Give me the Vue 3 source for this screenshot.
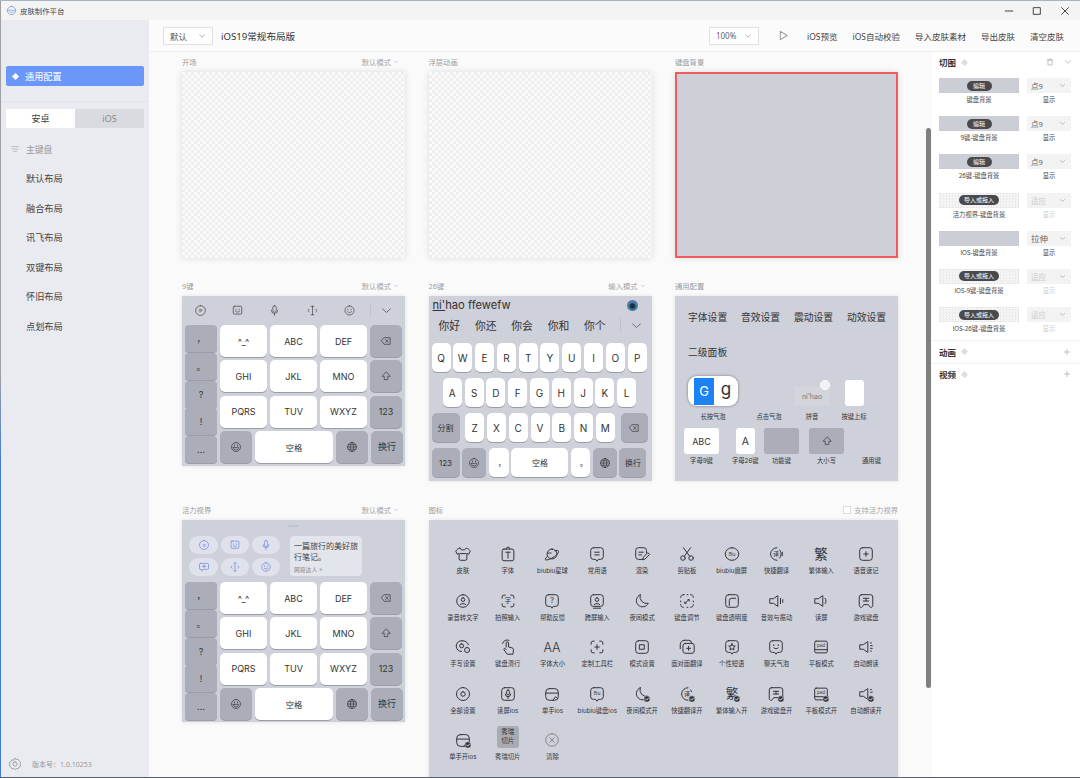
<script setup>
// 皮肤制作平台 — 主界面
const navItems = ["默认布局", "融合布局", "讯飞布局", "双键布局", "怀旧布局", "点划布局"];
const toolActions = ["iOS预览", "iOS自动校验", "导入皮肤素材", "导出皮肤", "清空皮肤"];

const p = {
  del: "M7 4.5h10v11H7L2.5 10zM9.5 7.8l4 4.4M13.5 7.8l-4 4.4",
  shift: "M10 3.5 3.5 10.5H7V16h6v-5.5h3.5z",
  globe: "M10 2.5a7.5 7.5 0 1 0 0 15a7.5 7.5 0 1 0 0-15zM2.5 10h15M10 2.5c-4 4.5-4 10.5 0 15M10 2.5c4 4.5 4 10.5 0 15M3.6 6.3h12.8M3.6 13.7h12.8",
  emoji: "M10 2.5a7.5 7.5 0 1 0 0 15a7.5 7.5 0 1 0 0-15zM5.5 11h9c-.3 2.6-2.2 4-4.5 4s-4.2-1.4-4.5-4zM7.5 6.5v2M12.5 6.5v2",
  chev: "M4 7.5 10 13l6-5.5",
  mic: "M10 2.5a2.6 2.6 0 0 0-2.6 2.6v4.8a2.6 2.6 0 0 0 5.2 0V5.1A2.6 2.6 0 0 0 10 2.5zM5 9.5a5 5 0 0 0 10 0M10 14.5v3",
  cursor: "M8 3.5h4M8 16.5h4M10 3.5v13M5 8l-2 2 2 2M15 8l2 2-2 2",
  smile: "M10 3a7 7 0 1 0 0 14a7 7 0 1 0 0-14zM7.5 8v1M12.5 8v1M7 12c1.5 1.5 4.5 1.5 6 0",
  face: "M5 3.5h10A1.5 1.5 0 0 1 16.5 5v9a1.5 1.5 0 0 1-1.5 1.5H5A1.5 1.5 0 0 1 3.5 14V5A1.5 1.5 0 0 1 5 3.5zM7.5 8v1M12.5 8v1M7 11.5c1.5 1.3 4.5 1.3 6 0",
  circ: "M10 2.5a7.5 7.5 0 1 0 0 15a7.5 7.5 0 1 0 0-15z",
};

const toolbarIcons = [
  { d: p.circ, t: "拼" },
  { d: p.face },
  { d: p.mic },
  { d: p.cursor },
  { d: p.smile },
];
const vitalityRows = [
  [{ d: p.circ, t: "译", c: "w29" }, { d: p.face, c: "w28" }, { d: p.mic, c: "w28" }],
  [{ d: "M4 4h12a1.5 1.5 0 0 1 1.5 1.5v7A1.5 1.5 0 0 1 16 14H9l-3 2.5V14H4a1.5 1.5 0 0 1-1.5-1.5v-7A1.5 1.5 0 0 1 4 4zM7 9h6M10 6.5v5", c: "w29" }, { d: p.cursor, c: "w28" }, { d: p.smile, c: "w28" }],
];

const sideKeys = ["，", "。", "?", "!", "..."];
const nineRows = [
  [{ t: "^_^" }, { t: "ABC" }, { t: "DEF" }, { i: p.del, c: "fn" }],
  [{ t: "GHI" }, { t: "JKL" }, { t: "MNO" }, { i: p.shift, c: "fn" }],
  [{ t: "PQRS" }, { t: "TUV" }, { t: "WXYZ" }, { t: "123", c: "fn" }],
  [{ i: p.emoji, c: "fn" }, { t: "空格", c: "space" }, { i: p.globe, c: "fn" }, { t: "换行", c: "fn" }],
];

const candidates = ["你好", "你还", "你会", "你和", "你个"];
const rowQ = "QWERTYUIOP".split("");
const rowA = "ASDFGHJKL".split("");
const rowZ = "ZXCVBNM".split("");
const bottomRow = [
  { t: "123", c: "w28 fn" },
  { i: p.emoji, c: "w24 fn" },
  { t: "，", c: "w20 nudge" },
  { t: "空格", c: "w57" },
  { t: "。", c: "w19 nudge" },
  { i: p.globe, c: "w24 fn" },
  { t: "换行", c: "w27 fn" },
];

const cfgTabs = ["字体设置", "音效设置", "震动设置", "动效设置"];

const sliceRows = [
  { label: "键盘背景", btn: "编辑", mode: "点9" },
  { label: "9键-键盘背景", btn: "编辑", mode: "点9" },
  { label: "26键-键盘背景", btn: "编辑", mode: "点9" },
  { label: "活力视界-键盘背景", btn: "导入或拖入", mode: "适应", off: true },
  { label: "iOS-键盘背景", mode: "拉伸", big: true },
  { label: "iOS-9键-键盘背景", btn: "导入或拖入", mode: "适应", off: true },
  { label: "iOS-26键-键盘背景", btn: "导入或拖入", mode: "适应", off: true },
];

// 图标面板用到的基础形状
const box = "M6 3h8a3 3 0 0 1 3 3v8a3 3 0 0 1-3 3H6a3 3 0 0 1-3-3V6a3 3 0 0 1 3-3z";
const bubble = "M6 3h8a3 3 0 0 1 3 3v7a3 3 0 0 1-3 3h-2.5L10 18l-1.5-2H6a3 3 0 0 1-3-3V6a3 3 0 0 1 3-3z";
const circle = "M10 3a7 7 0 1 0 0 14a7 7 0 1 0 0-14z";
const corners = "M7 3.5H5.5a2 2 0 0 0-2 2V7M13 3.5h1.5a2 2 0 0 1 2 2V7M7 16.5H5.5a2 2 0 0 1-2-2V13M13 16.5h1.5a2 2 0 0 0 2-2V13";
const moon = "M8 3a7 7 0 1 0 9 9.5A7.5 7.5 0 0 1 8 3z";
const speaker = "M3.5 7.5H7L12 4v12l-5-3.5H3.5z";
const pad = "M4.5 3.5h11A1.5 1.5 0 0 1 17 5v10a1.5 1.5 0 0 1-1.5 1.5h-11A1.5 1.5 0 0 1 3 15V5a1.5 1.5 0 0 1 1.5-1.5zM3 13h14";
const person = "M10 6.5a2 2 0 1 0 0 4a2 2 0 1 0 0-4zM6.8 14c.6-1.6 5.8-1.6 6.4 0";
const game = "M5 3h10a2.5 2.5 0 0 1 2.5 2.5V15a2 2 0 0 1-3.6 1.2L12.5 14h-5l-1.4 2.2A2 2 0 0 1 2.5 15V5.5A2.5 2.5 0 0 1 5 3zM7 7h6M7 10h6M10 7v3";
const onehand = "M7 4h6a4 4 0 0 1 4 4v5a4 4 0 0 1-4 4H7a4 4 0 0 1-4-4V8a4 4 0 0 1 4-4zM3 9h14M11 17l3-4 2 2";

const iconItems = [
  { l: "皮肤", d: "M6.5 3.5C4.5 4 2.8 5 2 7l1.5 3.2 2.2-.8v6.1A1.5 1.5 0 0 0 7.2 17h5.6a1.5 1.5 0 0 0 1.5-1.5V9.4l2.2.8L18 7c-.8-2-2.5-3-4.5-3.5-.6 1.4-1.9 2-3.5 2s-2.9-.6-3.5-2zM7 9.5h6" },
  { l: "字体", d: "M5.5 4.5h9a2 2 0 0 1 2 2v9a2 2 0 0 1-2 2h-9a2 2 0 0 1-2-2v-9a2 2 0 0 1 2-2zM8 4.5 9 2.5h2l1 2M7.5 8h5M10 8v6.5" },
  { l: "biubiu星球", d: "M10 4.5a5.5 5.5 0 1 0 0 11a5.5 5.5 0 1 0 0-11zM5 12.5C2.5 14.5 2 16 3 16.5c1.5.8 6-1.2 9.5-3.5s5.5-5 4.5-6.5c-.5-.8-2-.6-3.5 0M6 9h3" },
  { l: "常用语", d: bubble + "M7.5 8h5M7.5 11h5" },
  { l: "渲染", d: "M15 9V6a3 3 0 0 0-3-3H6a3 3 0 0 0-3 3v7a3 3 0 0 0 3 3h5M6.5 8h5M6.5 11h3M11 16l.5-2.5 5-5 2 2-5 5z" },
  { l: "剪贴板", d: "M8 14.5a2.5 2.5 0 1 1-5 0a2.5 2.5 0 1 1 5 0zM17 14.5a2.5 2.5 0 1 1-5 0a2.5 2.5 0 1 1 5 0zM7 12.5 14 3M13 12.5 6 3" },
  { l: "biubiu魔屏", d: "M10 3a7.5 7 0 1 0 0 14a7.5 7 0 1 0 0-14z", t: "Biu", ts: 5, ty: 11.8 },
  { l: "快捷翻译", d: "M11 3a7 7 0 1 0 0 14M14 5.5a7 7 0 0 1 0 9M17 8v4", t: "译", ts: 6.5, ty: 12.3 },
  { l: "繁体输入", t: "繁", ts: 15, ty: 15.5 },
  { l: "语音速记", d: box + "M7.5 10h5M10 7.5v5" },

  { l: "录音转文字", d: circle + person },
  { l: "拍照输入", d: corners, t: "字", ts: 7, ty: 12.5 },
  { l: "帮助反馈", d: bubble, t: "?", ts: 8, ty: 12.5 },
  { l: "跨屏输入", d: "M6 3h8a3 3 0 0 1 3 3v7a3 3 0 0 1-3 3H6a3 3 0 0 1-3-3V6a3 3 0 0 1 3-3z" + person + "M6 18h8" },
  { l: "夜间模式", d: moon },
  { l: "键盘调节", d: "M6 3h1M10 3h1M14 3c2 0 3 1 3 3M17 10v1M17 14c0 2-1 3-3 3M10 17h1M6 17c-2 0-3-1-3-3M3 10v1M3 6c0-2 1-3 3-3M8 12.5l4-4M11 8.5h1.5V10M9 12.5H7.5V11" },
  { l: "键盘透明度", d: box + "M7 15V9.5A2.5 2.5 0 0 1 9.5 7H14" },
  { l: "音效与振动", d: speaker + "M15 7v6M17.5 8.5v3" },
  { l: "读屏", d: speaker + "M14.5 7c1.5 2 1.5 4 0 6" },
  { l: "游戏键盘", d: game },

  { l: "手写设置", d: "M9 3C5 3 2.5 5.5 2.5 9s2.5 6 6 6M9 3c3.5 0 6 1.5 7 4.5M8.5 6.5a2.2 2.2 0 1 0 0 4.4a2.2 2.2 0 1 0 0-4.4zM14.5 10.5a2.8 2.8 0 1 0 0 5.6a2.8 2.8 0 1 0 0-5.6z" },
  { l: "键盘滑行", d: "M8 10V5.5a1.3 1.3 0 0 1 2.6 0V10l4 1a2 2 0 0 1 1.5 2.2L15.5 18H9l-3.5-5c-.6-1 .6-2 1.5-1.2L8 13M4 6a5 5 0 0 1 7-3.5" },
  { l: "字体大小", t: "AA", ts: 14, ty: 15.5, thin: true },
  { l: "定制工具栏", d: corners + "M7.5 10h5M10 7.5v5" },
  { l: "模式设置", d: box + "M7.5 7.5h5v5h-5z" },
  { l: "面对面翻译", d: "M7 2.5h5a3 3 0 0 1 3 3M2.5 12V7A4.5 4.5 0 0 1 7 2.5M8 6h7.5A2.5 2.5 0 0 1 18 8.5v6a2.5 2.5 0 0 1-2.5 2.5H8a2.5 2.5 0 0 1-2.5-2.5v-6A2.5 2.5 0 0 1 8 6zM9.5 11.5h4.5M11.75 9.2v4.6" },
  { l: "个性短语", d: bubble + "M10 6.3l1.1 2.4 2.5.3-1.8 1.7.4 2.5-2.2-1.2-2.2 1.2.4-2.5L6.4 9l2.5-.3z" },
  { l: "聊天气泡", d: bubble + "M7.5 7.5v1M12.5 7.5v1M7.5 11c1.5 1.2 3.5 1.2 5 0" },
  { l: "平板模式", d: pad, t: "pad", ts: 5, ty: 9.8 },
  { l: "自动朗读", d: speaker + "M15 5.5h1M15 8.5h2M15 11.5h2M15 14.5h1" },

  { l: "全部设置", d: "M10 2.8a7.2 7.2 0 1 0 0 14.4a7.2 7.2 0 1 0 0-14.4zM10 7.5a2.5 2.5 0 1 0 0 5a2.5 2.5 0 1 0 0-5z" },
  { l: "读屏ios", d: box + "M10 5.5A1.5 1.5 0 0 0 8.5 7v2.5a1.5 1.5 0 0 0 3 0V7A1.5 1.5 0 0 0 10 5.5zM7 10a3 3 0 0 0 6 0M10 13v2" },
  { l: "单手ios", d: onehand },
  { l: "biubiu键盘ios", d: bubble, t: "Biu", ts: 5, ty: 11.5 },
  { l: "夜间模式开", d: moon, on: true },
  { l: "快捷翻译开", d: "M11 3a7 7 0 1 0 0 14M14 5.5a7 7 0 0 1 1 2", t: "译", ts: 6.5, ty: 12.3, on: true },
  { l: "繁体输入开", t: "繁", ts: 14, ty: 14, on: true },
  { l: "游戏键盘开", d: game, on: true },
  { l: "平板模式开", d: pad, t: "pad", ts: 5, ty: 9.8, on: true },
  { l: "自动朗读开", d: speaker + "M15 5h1M15 8h2", on: true },

  { l: "单手开ios", d: onehand, on: true },
  { l: "秀瑞切片", tile: true },
  { l: "清除", d: circle + "M7.5 7.5l5 5M12.5 7.5l-5 5", faint: true },
];
</script>

<template>
  <div class="window">
    <header class="titlebar">
      <svg class="logo" viewBox="0 0 20 20"><path d="M10 2.5a7.5 7.5 0 1 0 0 15a7.5 7.5 0 1 0 0-15zM3 9.5h14M6.5 12.5c2 1.5 5 1.5 7 0" /></svg>
      <span class="app-name">皮肤制作平台</span>
      <div class="win-btns">
        <svg viewBox="0 0 12 12"><path d="M1.5 6h9" /></svg>
        <svg viewBox="0 0 12 12"><path d="M2 2h8v8H2z" /></svg>
        <svg viewBox="0 0 12 12"><path d="M2 2l8 8M10 2l-8 8" /></svg>
      </div>
    </header>

    <div class="body">
      <aside class="sidebar">
        <div class="nav-active"><i class="dot"></i>通用配置</div>
        <div class="side-line"></div>
        <div class="tabs">
          <div class="tab on">安卓</div>
          <div class="tab">iOS</div>
        </div>
        <div class="group-title">
          <svg viewBox="0 0 10 10"><path d="M1 2h8M1 5h8M3 8h4" /></svg>
          主键盘
        </div>
        <div v-for="n in navItems" :key="n" class="nav-item">{{ n }}</div>
        <div class="version">
          <svg viewBox="0 0 20 20"><path d="M10 2l2 1.5 2.6-.3 1.2 2.3L18 8l-.6 2.5.6 2.5-2.2 1.5-1.2 2.3-2.6-.3L10 18l-2-1.5-2.6.3-1.2-2.3L2 13l.6-2.5L2 8l2.2-1.5 1.2-2.3 2.6.3zM10 7a3 3 0 1 0 0 6a3 3 0 1 0 0-6z" /></svg>
          <span>版本号：1.0.10253</span>
        </div>
      </aside>

      <main class="main">
        <div class="toolbar">
          <div class="select">默认<svg viewBox="0 0 10 10"><path d="M2 3.5 5 6.5l3-3" /></svg></div>
          <div class="doc-title">iOS19常规布局版</div>
          <div class="spacer"></div>
          <div class="select zoom">100%<svg viewBox="0 0 10 10"><path d="M2 3.5 5 6.5l3-3" /></svg></div>
          <svg class="play" viewBox="0 0 12 12"><path d="M2.5 1.5 10 6l-7.5 4.5z" /></svg>
          <span v-for="a in toolActions" :key="a" class="act">{{ a }}</span>
        </div>

        <div class="content">
          <div class="canvas">
            <section class="card">
              <div class="card-head"><span>开场</span><span class="mode">默认模式<svg viewBox="0 0 10 10"><path d="M2 3.5 5 6.5l3-3" /></svg></span></div>
              <div class="preview checker"></div>
            </section>
            <section class="card">
              <div class="card-head"><span>浮层动画</span></div>
              <div class="preview checker"></div>
            </section>
            <section class="card">
              <div class="card-head"><span>键盘背景</span></div>
              <div class="preview bg-selected"></div>
            </section>

            <section class="card">
              <div class="card-head"><span>9键</span><span class="mode">默认模式<svg viewBox="0 0 10 10"><path d="M2 3.5 5 6.5l3-3" /></svg></span></div>
              <div class="kb">
                <div class="kb-tools">
                  <svg v-for="(ic, i) in toolbarIcons" :key="i" class="tool-ic" viewBox="0 0 20 20">
                    <path :d="ic.d" /><text v-if="ic.t" x="10" y="12.5" text-anchor="middle" font-size="6">{{ ic.t }}</text>
                  </svg>
                  <i class="tool-sep"></i>
                  <svg class="tool-ic chev" viewBox="0 0 20 20"><path :d="p.chev" /></svg>
                </div>
                <div class="nine">
                  <div class="side-col"><div v-for="s in sideKeys" :key="s" class="key fn side">{{ s }}</div></div>
                  <div class="nine-rows">
                    <div v-for="(row, r) in nineRows" :key="r" class="nine-row">
                      <div v-for="(k, i) in row" :key="i" class="key" :class="k.c || 'main'">
                        <svg v-if="k.i" class="key-ic" viewBox="0 0 20 20"><path :d="k.i" /></svg>
                        <template v-else>{{ k.t }}</template>
                      </div>
                    </div>
                  </div>
                </div>
              </div>
            </section>

            <section class="card">
              <div class="card-head"><span>26键</span><span class="mode">输入模式<svg viewBox="0 0 10 10"><path d="M2 3.5 5 6.5l3-3" /></svg></span></div>
              <div class="kb kb26">
                <div class="comp"><span><u>ni'</u>hao ffewefw</span><i class="orb"></i></div>
                <div class="cands">
                  <span v-for="c in candidates" :key="c">{{ c }}</span>
                  <i class="tool-sep"></i>
                  <svg class="tool-ic chev" viewBox="0 0 20 20"><path :d="p.chev" /></svg>
                </div>
                <div class="row26"><div v-for="k in rowQ" :key="k" class="key letter">{{ k }}</div></div>
                <div class="row26 center"><div v-for="k in rowA" :key="k" class="key letter">{{ k }}</div></div>
                <div class="row26 spread">
                  <div class="key fn w28 small">分割</div>
                  <div class="row-inner"><div v-for="k in rowZ" :key="k" class="key letter">{{ k }}</div></div>
                  <div class="key fn w27"><svg class="key-ic" viewBox="0 0 20 20"><path :d="p.del" /></svg></div>
                </div>
                <div class="row26 bottom">
                  <div v-for="(k, i) in bottomRow" :key="i" class="key small" :class="k.c">
                    <svg v-if="k.i" class="key-ic" viewBox="0 0 20 20"><path :d="k.i" /></svg>
                    <template v-else>{{ k.t }}</template>
                  </div>
                </div>
              </div>
            </section>

            <section class="card">
              <div class="card-head"><span>通用配置</span></div>
              <div class="kb cfg">
                <div class="cfg-tabs"><span v-for="t in cfgTabs" :key="t">{{ t }}</span></div>
                <div class="cfg-sub">二级面板</div>
                <div class="cfg-a">
                  <div class="cell w58">
                    <div class="bubble"><span class="bubble-g">G</span><span class="bubble-l">g</span></div>
                    <span class="tiny">长按气泡</span>
                  </div>
                  <div class="cell w54"><div class="blank"></div><span class="tiny">点击气泡</span></div>
                  <div class="cell w32">
                    <div class="pinyin">ni'hao<i class="pin-dot"></i></div>
                    <span class="tiny">拼音</span>
                  </div>
                  <div class="cell w52"><div class="mark"></div><span class="tiny">按键上标</span></div>
                </div>
                <div class="cfg-b">
                  <div class="cell"><div class="tile w35 light">ABC</div><span class="tiny">字母9键</span></div>
                  <div class="cell"><div class="tile w19 light big">A</div><span class="tiny">字母26键</span></div>
                  <div class="cell"><div class="tile w35 dark"></div><span class="tiny">功能键</span></div>
                  <div class="cell"><div class="tile w35 dark"><svg class="key-ic" viewBox="0 0 20 20"><path :d="p.shift" /></svg></div><span class="tiny">大小写</span></div>
                  <div class="cell"><div class="tile w35"></div><span class="tiny">通用键</span></div>
                </div>
              </div>
            </section>

            <section class="card">
              <div class="card-head"><span>活力视界</span><span class="mode">默认模式<svg viewBox="0 0 10 10"><path d="M2 3.5 5 6.5l3-3" /></svg></span></div>
              <div class="kb kb-vit">
                <div class="vit-top">
                  <i class="handle"></i>
                  <div class="pills">
                    <div v-for="(row, r) in vitalityRows" :key="r" class="pill-row">
                      <div v-for="(ic, i) in row" :key="i" class="pill" :class="ic.c">
                        <svg viewBox="0 0 20 20"><path :d="ic.d" /><text v-if="ic.t" x="10" y="12.5" text-anchor="middle" font-size="6">{{ ic.t }}</text></svg>
                      </div>
                    </div>
                  </div>
                  <div class="note">
                    <p>一篇旅行的美好旅行笔记。</p>
                    <span>网易达人 &gt;</span>
                  </div>
                </div>
                <div class="nine">
                  <div class="side-col"><div v-for="s in sideKeys" :key="s" class="key fn side">{{ s }}</div></div>
                  <div class="nine-rows">
                    <div v-for="(row, r) in nineRows" :key="r" class="nine-row">
                      <div v-for="(k, i) in row" :key="i" class="key" :class="k.c || 'main'">
                        <svg v-if="k.i" class="key-ic" viewBox="0 0 20 20"><path :d="k.i" /></svg>
                        <template v-else>{{ k.t }}</template>
                      </div>
                    </div>
                  </div>
                </div>
              </div>
            </section>

            <section class="card span2">
              <div class="card-head"><span>图标</span><span class="mode check"><i class="box"></i>支持活力视界</span></div>
              <div class="kb icons">
                <div v-for="ic in iconItems" :key="ic.l" class="icon-item">
                  <div v-if="ic.tile" class="slice-tile">秀瑞<br />切片</div>
                  <svg v-else class="icon" :class="{ faint: ic.faint }" viewBox="0 0 20 20">
                    <path v-if="ic.d" :d="ic.d" />
                    <text v-if="ic.t" x="10" :y="ic.ty" text-anchor="middle" :font-size="ic.ts" :class="{ thin: ic.thin }">{{ ic.t }}</text>
                    <g v-if="ic.on">
                      <circle class="badge" cx="15.5" cy="15.5" r="3.5" />
                      <path class="tick" d="M13.8 15.5l1.3 1.3 2.2-2.4" />
                    </g>
                  </svg>
                  <span class="icon-label">{{ ic.l }}</span>
                </div>
              </div>
            </section>
          </div>
          <i class="scroll-thumb"></i>

          <aside class="panel">
            <div class="panel-head">
              <b>切图</b><i class="hint"></i>
              <span class="spacer"></span>
              <svg viewBox="0 0 12 12"><path d="M2 3h8M4.5 3V1.8h3V3M3 3v7.5h6V3" /></svg>
              <svg viewBox="0 0 12 12"><path d="M2 4l4 4 4-4" /></svg>
            </div>
            <div v-for="s in sliceRows" :key="s.label" class="slice">
              <div class="slice-top">
                <div class="slice-box" :class="{ 'slice-empty': s.off }">
                  <span v-if="s.btn" class="slice-btn">{{ s.btn }}</span>
                </div>
                <div class="slice-sel" :class="{ off: s.off, big: s.big }">
                  {{ s.mode }}<svg viewBox="0 0 10 10"><path d="M2 3.5 5 6.5l3-3" /></svg>
                </div>
              </div>
              <div class="slice-bottom">
                <span class="slice-name">{{ s.label }}</span>
                <span class="slice-show" :class="{ off: s.off }">显示</span>
              </div>
            </div>
            <div class="panel-sec"><b>动画</b><i class="hint"></i><span class="spacer"></span><svg viewBox="0 0 12 12"><path d="M6 2v8M2 6h8" /></svg></div>
            <div class="panel-sec"><b>视频</b><i class="hint"></i><span class="spacer"></span><svg viewBox="0 0 12 12"><path d="M6 2v8M2 6h8" /></svg></div>
          </aside>
        </div>
      </main>
    </div>
  </div>
</template>

<style>
html, body { margin: 0; overflow: hidden; background: #fff; }
</style>

<style scoped>
.window { width: 1080px; height: 778px; box-sizing: border-box; display: flex; flex-direction: column; overflow: hidden; position: relative; border-top: 1px solid #a9b4c0; padding-left: 1px; border-bottom: 1px solid #56606e; font-family: "Noto Sans", "Noto Sans CJK SC", sans-serif; color: #333; }
.window::before { content: ""; position: absolute; left: 0; top: 0; bottom: 0; width: 1px; background: linear-gradient(#a0a0a0 48%, #3a7bdc 60%); }
svg { fill: none; stroke: currentColor; stroke-width: 1.1; stroke-linecap: round; stroke-linejoin: round; display: block; }
svg text { fill: currentColor; stroke: none; font-family: "Inter", "Noto Sans CJK SC", sans-serif; }
i { display: block; font-style: normal; }
.spacer { flex: 1; }

.titlebar { height: 19px; flex: none; display: flex; align-items: center; background: #f4f4f4; padding-left: 5px; }
.logo { width: 11px; height: 11px; color: #4d86d9; }
.app-name { font-size: 7.4px; margin-left: 3px; color: #444; }
.win-btns { margin-left: auto; display: flex; gap: 18px; padding-right: 10px; }
.win-btns svg { width: 10px; height: 10px; color: #333; }

.body { flex: 1; display: flex; min-height: 0; }
.sidebar { width: 148px; flex: none; background: #e9ebf1; box-sizing: border-box; padding: 46px 5px 0; display: flex; flex-direction: column; position: relative; }
.nav-active { height: 20px; background: #6b97fb; border-radius: 2px; color: #fff; font-size: 9.2px; display: flex; align-items: center; padding-left: 7px; }
.dot { width: 5px; height: 5px; background: #fff; transform: rotate(45deg); margin-right: 7px; }
.side-line { height: 1px; background: #e2e4ea; margin: 15px -5px 7px; }
.tabs { display: flex; height: 19px; }
.tab { flex: 1; background: #d9dbe1; color: #888; font-size: 9px; display: flex; align-items: center; justify-content: center; }
.tab.on { background: #fff; color: #444; }
.group-title { display: flex; align-items: center; font-size: 8.8px; color: #999; margin: 14px 0 8px; height: 14px; padding-left: 5px; }
.group-title svg { width: 8px; height: 8px; margin-right: 7px; color: #bbb; }
.nav-item { height: 29.6px; line-height: 29.6px; font-size: 9.2px; color: #444; padding-left: 20px; }
.version { position: absolute; left: 7px; bottom: 6px; display: flex; align-items: center; gap: 10px; font-size: 7px; color: #999; }
.version svg { width: 14px; height: 14px; color: #8a8f98; }

.main { flex: 1; min-width: 0; display: flex; flex-direction: column; background: #fafafa; }
.toolbar { height: 32px; flex: none; display: flex; align-items: center; padding: 0 16px 0 14px; box-sizing: border-box; border-bottom: 1px solid #f0f0f0; background: #fbfbfb; }
.select { width: 50px; height: 18px; box-sizing: border-box; border: 1px solid #e0e0e0; background: #fff; font-size: 8.5px; display: flex; align-items: center; justify-content: space-between; padding: 0 6px; color: #555; }
.select svg { width: 8px; height: 8px; color: #aaa; }
.zoom { font-size: 8px; margin-right: 19px; color: #666; }
.doc-title { font-size: 9.6px; margin-left: 8px; color: #333; }
.play { width: 11px; height: 11px; color: #999; margin-right: 18px; }
.act { font-size: 8.5px; color: #444; margin-left: 15px; white-space: nowrap; }
.play + .act { margin-left: 0; }

.content { flex: 1; display: flex; min-height: 0; position: relative; }
.canvas { width: 783px; flex: none; box-sizing: border-box; padding-left: 33px; display: grid; grid-template-columns: 223px 223px 223px; column-gap: 23.5px; row-gap: 18px; align-items: start; align-content: start; overflow: hidden; }
.scroll-thumb { position: absolute; left: 777px; top: 76px; width: 4.5px; height: 560px; background: #7f7f7f; border-radius: 3px; }
.card-head { height: 20px; display: flex; align-items: center; justify-content: space-between; font-size: 7.3px; color: #9c9c9c; }
.mode { padding-right: 6px; display: flex; align-items: center; gap: 2px; color: #a6a6a6; }
.mode svg { width: 6px; height: 6px; color: #bbb; }
.check { gap: 3px; padding-right: 0; }
.box { width: 6px; height: 6px; border: 1px solid #ddd; background: #fff; }
.preview { height: 186px; box-shadow: 0 0 7px rgba(0, 0, 0, .12); }
.checker { background: repeating-conic-gradient(#eeeeee 0 25%, #fafafa 0 50%) 0 0 / 6px 6px; }
.bg-selected { box-sizing: border-box; background: #cdd0d6; border: 2px solid #ef5b5f; }
.span2 { grid-column: span 2; }

.kb { background: #ced0da; box-shadow: 0 0 4px rgba(0, 0, 0, .1); font-family: "Inter", "Noto Sans CJK SC", sans-serif; padding-bottom: 3px; color: #333; }
.kb-vit { padding-bottom: 2px; }
.kb-tools { height: 29px; display: flex; align-items: center; padding-left: 12px; }
.tool-ic { width: 13px; height: 13px; color: #444; margin-right: 24.2px; flex: none; }
.kb-tools .tool-ic:nth-of-type(5) { margin-right: 0; }
.tool-sep { width: 1px; height: 14px; background: #c0c2cc; margin-left: 14px; }
.chev { margin: 0 0 0 9px; }
.nine { display: flex; gap: 3px; padding-left: 3px; }
.side-col { width: 32px; display: flex; flex-direction: column; gap: .75px; }
.nine-rows { display: flex; flex-direction: column; justify-content: space-between; }
.nine-row { display: flex; gap: 3px; }
.key { display: flex; align-items: center; justify-content: center; border-radius: 5px; background: #fff; box-shadow: 0 1px 0 #9a9ca6; font-size: 9px; color: #333; flex: none; }
.key.main { width: 47px; height: 32px; }
.key.space { width: 78px; height: 32px; font-size: 8.3px; }
.key.fn { width: 32px; height: 32px; background: #abaeb8; }
.key.fn.side { height: 27px; border-radius: 4px; }
.key-ic { width: 12px; height: 12px; color: #333; }

.kb26 { padding-bottom: 4px; margin-bottom: 1px; }
.comp { height: 18px; display: flex; align-items: center; justify-content: space-between; padding: 0 14px 0 4px; font-size: 11.2px; }
.orb { width: 11px; height: 11px; border-radius: 50%; background: radial-gradient(circle at 50% 55%, #1f2a44 0 22%, #3a8a9e 48%, #7a5fb5 72%, #c6cbe0 100%); }
.cands { height: 22px; margin-bottom: 7px; display: flex; align-items: center; padding-left: 10px; font-size: 10.8px; gap: 14.8px; color: #333; }
.cands .tool-sep { margin-left: 0; }
.cands .chev { margin-left: -6px; }
.row26 { display: flex; height: 29px; margin-bottom: 6px; padding: 0 4px 0 3px; gap: 2.8px; }
.bottom { margin-bottom: 0; gap: 2.66px; }
.center { justify-content: center; }
.spread { justify-content: space-between; }
.row-inner { display: flex; gap: 2.8px; }
.letter { width: 19px; font-size: 10px; }
.row26 .key { height: 29px; }
.small { font-size: 8px; }
.nudge { padding-left: 6px; box-sizing: border-box; }
.key.w28 { width: 28px; }
.key.w27 { width: 27px; }
.key.w24 { width: 24px; }
.key.w20 { width: 20px; }
.key.w19 { width: 19px; }
.key.w57 { width: 57px; }

.cfg { height: 185px; box-sizing: border-box; padding: 15px 0 0 9px; }
.cfg-tabs { display: flex; gap: 13.8px; margin-left: 4px; font-size: 9.8px; line-height: 14px; }
.cfg-sub { font-size: 9.8px; line-height: 14px; margin: 21px 0 0 4px; }
.cfg-a { display: flex; margin-top: 16px; }
.cell { display: flex; flex-direction: column; align-items: center; }
.cell.w58 { width: 58px; }
.cell.w54 { width: 54px; }
.cell.w32 { width: 32px; }
.cell.w52 { width: 52px; }
.tiny { font-size: 6.3px; line-height: 8px; white-space: nowrap; margin-top: 7px; color: #333; }
.cfg-b .tiny { margin-top: 3px; }
.bubble { width: 50px; height: 30px; box-sizing: border-box; background: #fff; border-radius: 9px; box-shadow: 0 0 3px #777; display: flex; align-items: center; padding-left: 6px; }
.bubble-g { width: 20px; height: 27px; background: #1d82f7; color: #fff; font-size: 13px; display: flex; align-items: center; justify-content: center; }
.bubble-l { flex: 1; text-align: center; font-size: 17px; line-height: 22px; padding-bottom: 4px; }
.blank { height: 30px; }
.pinyin { width: 34px; height: 20px; margin-top: 10px; background: #d3d5dd; color: #777; font-size: 7px; display: flex; align-items: center; justify-content: center; position: relative; flex: none; }
.pin-dot { position: absolute; right: -1px; top: -6px; width: 10px; height: 10px; border-radius: 50%; background: #f1f1f5; border: 1px solid #fff; box-sizing: border-box; }
.mark { width: 19px; height: 26px; margin-top: 4px; background: #fff; border-radius: 3px; flex: none; }
.cfg-b { display: grid; grid-template-columns: 48px 32px 45px 45px 45px; justify-items: start; margin-top: 7px; }
.tile { height: 26px; border-radius: 3px; display: flex; align-items: center; justify-content: center; font-size: 9px; }
.tile.w35 { width: 35px; }
.tile.w19 { width: 19px; }
.tile.light { background: #fff; }
.tile.big { font-size: 10.5px; }
.tile.dark { background: #abaeb8; }

.vit-top { height: 62px; display: flex; padding: 16px 0 0 7px; box-sizing: border-box; position: relative; }
.handle { position: absolute; left: 105px; top: 5px; width: 12px; height: 2px; background: #c0c3d0; border-radius: 0 0 6px 6px; }
.pills { display: flex; flex-direction: column; gap: 4px; }
.pill-row { display: flex; gap: 3px; }
.pill { height: 18px; border-radius: 9px; background: #dfe2ea; display: flex; align-items: center; justify-content: center; color: #6a7de0; }
.pill svg { width: 12px; height: 12px; }
.pill.w29 { width: 29px; }
.pill.w28 { width: 28px; }
.note { width: 72px; height: 40px; box-sizing: border-box; margin-left: 10px; background: #e3e5ec; border-radius: 4px; padding: 5px 3px 0 4px; }
.note p { margin: 0; font-size: 8px; line-height: 11px; color: #444; }
.note span { display: block; font-size: 5.8px; color: #888; margin-top: 3px; line-height: 7px; }

.icons { height: 270px; box-sizing: border-box; padding: 25px 0 0 12px; display: grid; grid-template-columns: repeat(10, 44.8px); grid-auto-rows: 46.5px; align-content: start; }
.icon-item { display: flex; flex-direction: column; align-items: center; }
.icon { width: 18px; height: 18px; color: #33343a; flex: none; }
.icon.faint { color: #888; }
.thin { font-weight: 300; }
.badge { fill: #33343a; stroke: #ced0da; stroke-width: .6; }
.tick { stroke: #fff; stroke-width: .9; }
.icon-label { font-size: 6.3px; line-height: 8px; margin-top: 4px; white-space: nowrap; color: #33343a; }
.slice-tile { width: 22px; height: 22px; margin-top: -5px; margin-bottom: 1px; border-radius: 3px; background: #a9abb3; font-size: 6.5px; line-height: 9px; text-align: center; padding-top: 2px; box-sizing: border-box; flex: none; color: #333; }

.panel { width: 148px; flex: none; background: #fff; box-sizing: border-box; font-size: 6.3px; }
.panel-head { height: 20px; display: flex; align-items: center; padding: 0 8px 0 7px; margin-bottom: 6px; }
.panel-head b, .panel-sec b { font-size: 8.5px; font-weight: 600; color: #333; }
.panel-head svg, .panel-sec svg { width: 8px; height: 8px; color: #aaa; margin-left: 10px; }
.hint { width: 5px; height: 5px; background: #ddd; transform: rotate(45deg); margin-left: 6px; }
.slice { padding-left: 7px; height: 38.2px; }
.slice:nth-last-child(3) { height: 33px; }
.slice-top { display: flex; gap: 8px; }
.slice-box { width: 80px; height: 15px; background: #ccced6; display: flex; align-items: center; justify-content: center; box-shadow: inset 0 0 1px #bbb; }
.slice-empty { background: repeating-conic-gradient(#ececec 0 25%, #f8f8f8 0 50%) 0 0 / 3px 3px; }
.slice-btn { height: 10px; padding: 0 5px; min-width: 15px; border-radius: 5px; background: #4a4a4e; color: #fff; font-size: 6px; line-height: 10px; text-align: center; }
.slice-sel { width: 44px; height: 15px; box-sizing: border-box; background: #f3f3f3; display: flex; align-items: center; justify-content: space-between; padding: 0 5px 0 4px; font-size: 7.5px; color: #666; }
.slice-sel.big { font-size: 8.5px; }
.slice-sel.off { color: #ccc; }
.slice-sel svg { width: 7px; height: 7px; color: #aaa; }
.slice-bottom { display: flex; gap: 8px; margin-top: 3px; line-height: 8px; }
.slice-name { width: 80px; text-align: center; color: #444; white-space: nowrap; }
.slice-show { width: 44px; text-align: center; color: #444; }
.slice-show.off { color: #ccc; }
.panel-sec { height: 22.5px; display: flex; align-items: center; padding: 0 9px 0 7px; border-top: 1px solid #f0f0f0; box-sizing: border-box; }
</style>
